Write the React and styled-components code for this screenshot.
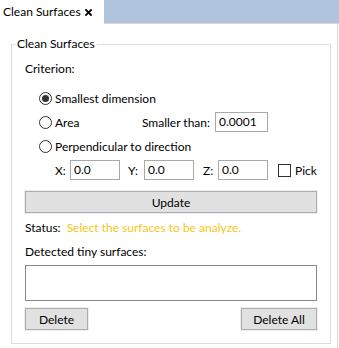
import React from 'react';
import styled, { createGlobalStyle } from 'styled-components';

const GlobalStyle = createGlobalStyle`
  html, body { margin: 0; padding: 0; background: #ffffff; }
  body {
    font-family: Lato, "Noto Sans", "Liberation Sans", sans-serif;
    font-size: 12px;
    color: #000000;
  }
  * { box-sizing: border-box; }
`;

const Window = styled.div`
  width: 339px;
  height: 348px;
  display: flex;
  flex-direction: column;
  background: #ffffff;
  overflow: hidden;
`;

const TabBar = styled.div`
  display: flex;
  height: 24px;
  flex: none;
`;

const Tab = styled.div`
  width: 104px;
  height: 24px;
  display: flex;
  align-items: center;
  padding: 0 12px 1px 3px;
  background: #ffffff;
  white-space: nowrap;
`;

const CloseIcon = styled.svg`
  width: 7px;
  height: 7px;
  margin-left: auto;
  margin-top: 1px;
`;

const TabFill = styled.div`
  flex: 1;
  background: #b0c4de;
  border-bottom: 1px solid #d6d6d6;
`;

const Panel = styled.div`
  flex: 1;
  width: 338px;
  border-right: 1px solid #d9d9d9;
  padding: 20px 6px 0 11px;
`;

const Group = styled.div`
  position: relative;
  height: 300px;
  border: 1px solid #dcdcdc;
  padding: 16px 13px 13px 13px;
  display: flex;
  flex-direction: column;
`;

const GroupTitle = styled.div`
  position: absolute;
  top: -9px;
  left: 3px;
  padding: 0 2px;
  line-height: 16px;
  background: #ffffff;
`;

const Text = styled.div`
  line-height: 16px;
  white-space: nowrap;
  margin-top: ${p => p.$mt || 0}px;
`;

const Options = styled.div`
  margin-top: 11px;
  display: flex;
  flex-direction: column;
  gap: 4px;
  padding-left: 14px;
`;

const OptionRow = styled.div`
  height: 20px;
  display: flex;
  align-items: center;
`;

const RadioLabel = styled.label`
  display: flex;
  align-items: center;
  gap: 3px;
  white-space: nowrap;
  flex: ${p => (p.$grow ? 1 : 'none')};
`;

const RadioCircle = styled.span`
  width: 13px;
  height: 13px;
  border-radius: 50%;
  border: 1px solid #333333;
  display: flex;
  align-items: center;
  justify-content: center;
  &::after {
    content: '';
    display: ${p => (p.$checked ? 'block' : 'none')};
    width: 7px;
    height: 7px;
    border-radius: 50%;
    background: #333333;
  }
`;

const FieldLabel = styled.span`
  white-space: nowrap;
  width: ${p => (p.$w ? `${p.$w}px` : 'auto')};
  margin-right: ${p => p.$mr || 0}px;
`;

const Input = styled.div`
  width: ${p => p.$w}px;
  height: 20px;
  border: 1px solid #a9a9a9;
  padding: 0 3px;
  line-height: 18px;
  background: #ffffff;
  margin-right: ${p => p.$mr || 0}px;
`;

const CoordRow = styled.div`
  height: 20px;
  display: flex;
  align-items: center;
  padding-left: 16px;
`;

const CoordField = styled.div`
  display: flex;
  align-items: center;
  margin-right: ${p => p.$mr || 0}px;
`;

const CheckBox = styled.span`
  width: 13px;
  height: 13px;
  border: 1px solid #333333;
  margin-right: 4px;
`;

const Button = styled.div`
  height: 22px;
  width: ${p => (p.$w ? `${p.$w}px` : 'auto')};
  border: 1px solid #adadad;
  background: #e1e1e1;
  box-shadow: 0 0 0 1px #ededed;
  display: flex;
  align-items: center;
  justify-content: center;
  margin-top: ${p => p.$mt || 0}px;
  white-space: nowrap;
`;

const StatusRow = styled.div`
  display: flex;
  gap: 6px;
  line-height: 16px;
  margin-top: 7px;
`;

const StatusText = styled.span`
  color: #f9c521;
`;

const ListBox = styled.div`
  height: 36px;
  margin-top: 5px;
  border: 1px solid #828790;
  background: #ffffff;
`;

const ButtonRow = styled.div`
  display: flex;
  justify-content: space-between;
  margin-top: 7px;
`;

export default function App() {
  return (
    <Window>
      <GlobalStyle />
      <TabBar>
        <Tab>
          <span>Clean Surfaces</span>
          <CloseIcon viewBox="0 0 7 7">
            <path d="M1 1 L6 6 M6 1 L1 6" stroke="#000" strokeWidth="1.8" strokeLinecap="square" />
          </CloseIcon>
        </Tab>
        <TabFill />
      </TabBar>
      <Panel>
        <Group>
          <GroupTitle>Clean Surfaces</GroupTitle>
          <Text>Criterion:</Text>
          <Options>
            <OptionRow>
              <RadioLabel>
                <RadioCircle $checked />
                Smallest dimension
              </RadioLabel>
            </OptionRow>
            <OptionRow>
              <RadioLabel $grow>
                <RadioCircle />
                Area
              </RadioLabel>
              <FieldLabel $mr={5}>Smaller than:</FieldLabel>
              <Input $w={53} $mr={49}>0.0001</Input>
            </OptionRow>
            <OptionRow>
              <RadioLabel>
                <RadioCircle />
                Perpendicular to direction
              </RadioLabel>
            </OptionRow>
            <CoordRow>
              <CoordField $mr={8}>
                <FieldLabel $w={15}>X:</FieldLabel>
                <Input $w={50}>0.0</Input>
              </CoordField>
              <CoordField $mr={9}>
                <FieldLabel $w={16}>Y:</FieldLabel>
                <Input $w={50}>0.0</Input>
              </CoordField>
              <CoordField $mr={10}>
                <FieldLabel $w={15}>Z:</FieldLabel>
                <Input $w={50}>0.0</Input>
              </CoordField>
              <CheckBox />
              <span>Pick</span>
            </CoordRow>
          </Options>
          <Button $mt={11}>Update</Button>
          <StatusRow>
            <span>Status:</span>
            <StatusText>Select the surfaces to be analyze.</StatusText>
          </StatusRow>
          <Text $mt={8}>Detected tiny surfaces:</Text>
          <ListBox />
          <ButtonRow>
            <Button $w={63}>Delete</Button>
            <Button $w={76}>Delete All</Button>
          </ButtonRow>
        </Group>
      </Panel>
    </Window>
  );
}
